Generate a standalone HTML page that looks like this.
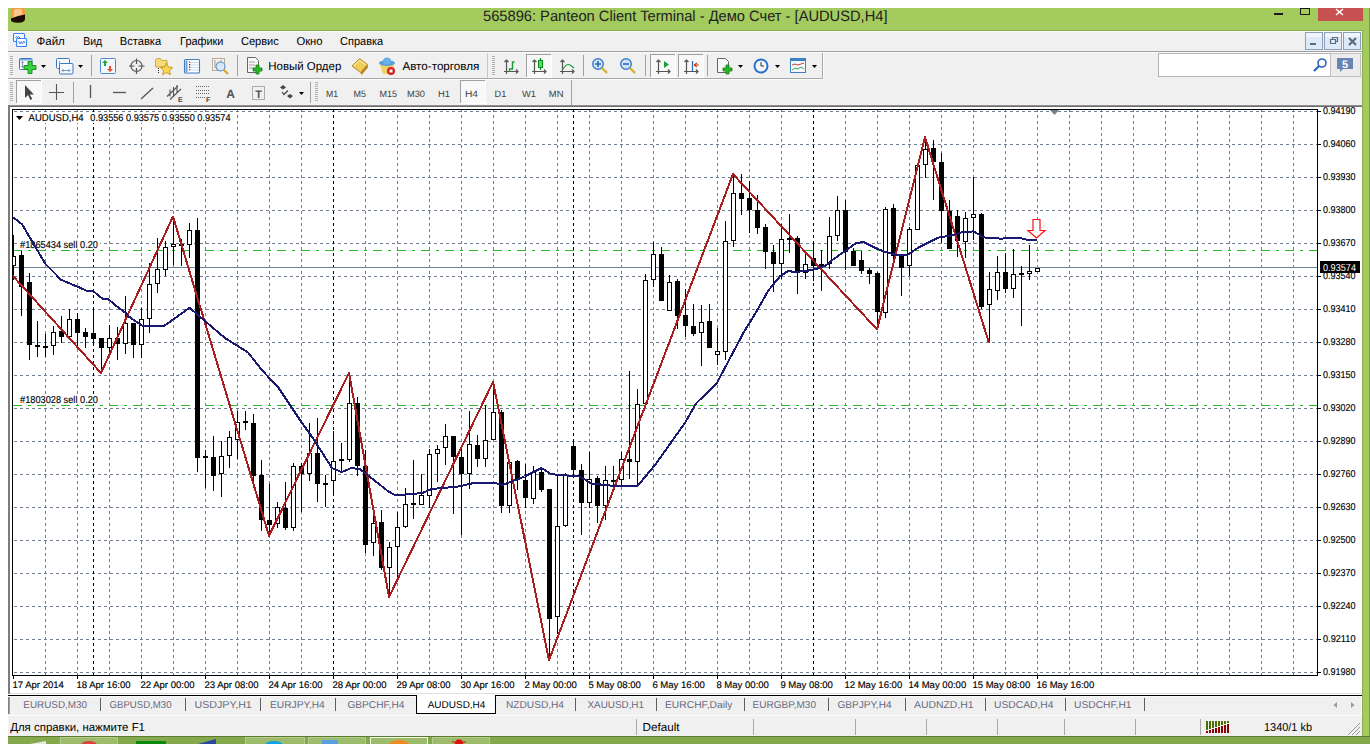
<!DOCTYPE html>
<html><head><meta charset="utf-8"><title>MT4</title>
<style>
html,body{margin:0;padding:0;width:1370px;height:744px;overflow:hidden;background:#fff;}
svg{position:absolute;left:0;top:0;display:block}
text{font-family:"Liberation Sans",sans-serif;}
.b{stroke:#000;stroke-width:0.15px;}
</style></head><body>
<svg width="1370" height="744" viewBox="0 0 1370 744" text-rendering="geometricPrecision">
<rect x="8" y="8" width="1362" height="23" fill="#a3cb5e" />
<rect x="8" y="30" width="1355" height="1" fill="#8aae4c" />
<rect x="1362" y="8" width="8" height="728" fill="#a3cb5e" />
<rect x="1362" y="30" width="1" height="706" fill="#8aae4c" />
<rect x="1369" y="8" width="1" height="728" fill="#7c9c44" />
<g transform="translate(11,8)"><rect x="0" y="0" width="14" height="12" rx="4" fill="#f79a38"/><path d="M3,1.5 Q7,0 11,1.5 L11.5,9 L2.5,10z" fill="#fdd0a0" opacity=".8"/><path d="M0,10.5 Q7,7.5 14,6.5 L14,11 Q14,14.7 7,14.7 Q0,14.7 0,12z" fill="#1e0c02"/></g>
<text x="483" y="20.8" font-size="15" fill="#222" font-weight="normal" text-anchor="start" font-family="Liberation Sans" textLength="404.5" lengthAdjust="spacingAndGlyphs" >565896: Panteon Client Terminal - Демо Счет - [AUDUSD,H4]</text>
<rect x="1274" y="13" width="9" height="2" fill="#1a1a1a" />
<rect x="1300.5" y="8.5" width="9" height="6" fill="none" stroke="#1a1a1a" stroke-width="1"/>
<rect x="1318" y="8" width="45" height="13" fill="#c75050" />
<path d="M1336,9 L1343,15 M1343,9 L1336,15" stroke="#fff" stroke-width="1.6"/>
<rect x="8" y="31" width="1354" height="1" fill="#fafafa" />
<rect x="8" y="32" width="1354" height="19" fill="#f0f0f0" />
<rect x="8" y="51" width="1354" height="1" fill="#a0a0a0" />
<rect x="8" y="52" width="1354" height="1" fill="#fafafa" />
<g><rect x="13.5" y="33.5" width="11" height="8" rx="1" fill="#fff" stroke="#3a80f0" stroke-width="1.1"/><path d="M15.5,38 l1,-1.5 1,1.5 1,-1.5 2,2" stroke="#3a80f0" fill="none"/><rect x="16.5" y="38.5" width="10" height="8" rx="1" fill="#fff" stroke="#3a80f0" stroke-width="1.1"/><path d="M18.5,41 l1.5,3 1.2,-2.5 1.2,2.5 1.5,-3 1,2" stroke="#3a80f0" fill="none" stroke-width="0.9"/></g>
<text x="36.5" y="45.2" font-size="11.5" fill="#000" font-weight="normal" text-anchor="start" font-family="Liberation Sans" textLength="28.3" lengthAdjust="spacingAndGlyphs" >Файл</text>
<text x="83.2" y="45.2" font-size="11.5" fill="#000" font-weight="normal" text-anchor="start" font-family="Liberation Sans" textLength="19.0" lengthAdjust="spacingAndGlyphs" >Вид</text>
<text x="119.7" y="45.2" font-size="11.5" fill="#000" font-weight="normal" text-anchor="start" font-family="Liberation Sans" textLength="41.5" lengthAdjust="spacingAndGlyphs" >Вставка</text>
<text x="180.1" y="45.2" font-size="11.5" fill="#000" font-weight="normal" text-anchor="start" font-family="Liberation Sans" textLength="43.3" lengthAdjust="spacingAndGlyphs" >Графики</text>
<text x="240.9" y="45.2" font-size="11.5" fill="#000" font-weight="normal" text-anchor="start" font-family="Liberation Sans" textLength="37.9" lengthAdjust="spacingAndGlyphs" >Сервис</text>
<text x="296.4" y="45.2" font-size="11.5" fill="#000" font-weight="normal" text-anchor="start" font-family="Liberation Sans" textLength="26.2" lengthAdjust="spacingAndGlyphs" >Окно</text>
<text x="340.1" y="45.2" font-size="11.5" fill="#000" font-weight="normal" text-anchor="start" font-family="Liberation Sans" textLength="43.0" lengthAdjust="spacingAndGlyphs" >Справка</text>
<rect x="1305.5" y="32.5" width="17" height="17" fill="#deeaf7" stroke="#8da0b8"/>
<rect x="1306" y="33" width="16" height="4" fill="#eef5fc" />
<rect x="1324.5" y="32.5" width="17" height="17" fill="#deeaf7" stroke="#8da0b8"/>
<rect x="1325" y="33" width="16" height="4" fill="#eef5fc" />
<rect x="1343.5" y="32.5" width="17" height="17" fill="#deeaf7" stroke="#8da0b8"/>
<rect x="1344" y="33" width="16" height="4" fill="#eef5fc" />
<rect x="1310" y="43" width="6" height="2" fill="#5c6b7e" />
<path d="M1330.5,39.5 h5 v4 h-5z M1332.5,39.5 v-2 h5 v4 h-2" fill="none" stroke="#5c6b7e" stroke-width="1.2"/>
<path d="M1349,38 L1356,45 M1356,38 L1349,45" stroke="#5c6b7e" stroke-width="2.2"/>
<rect x="8" y="53" width="1354" height="52" fill="#f0f0f0" />
<rect x="8" y="78" width="815" height="1" fill="#a8a8a8" />
<rect x="8" y="79" width="816" height="1" fill="#fcfcfc" />
<rect x="822" y="53" width="1" height="25" fill="#a8a8a8" />
<rect x="823" y="53" width="1" height="27" fill="#fcfcfc" />
<rect x="10" y="56" width="3" height="1" fill="#b0b0b0" />
<rect x="10" y="58" width="3" height="1" fill="#b0b0b0" />
<rect x="10" y="60" width="3" height="1" fill="#b0b0b0" />
<rect x="10" y="62" width="3" height="1" fill="#b0b0b0" />
<rect x="10" y="64" width="3" height="1" fill="#b0b0b0" />
<rect x="10" y="66" width="3" height="1" fill="#b0b0b0" />
<rect x="10" y="68" width="3" height="1" fill="#b0b0b0" />
<rect x="10" y="70" width="3" height="1" fill="#b0b0b0" />
<rect x="10" y="72" width="3" height="1" fill="#b0b0b0" />
<rect x="10" y="74" width="3" height="1" fill="#b0b0b0" />
<rect x="10" y="82" width="3" height="1" fill="#b0b0b0" />
<rect x="10" y="84" width="3" height="1" fill="#b0b0b0" />
<rect x="10" y="86" width="3" height="1" fill="#b0b0b0" />
<rect x="10" y="88" width="3" height="1" fill="#b0b0b0" />
<rect x="10" y="90" width="3" height="1" fill="#b0b0b0" />
<rect x="10" y="92" width="3" height="1" fill="#b0b0b0" />
<rect x="10" y="94" width="3" height="1" fill="#b0b0b0" />
<rect x="10" y="96" width="3" height="1" fill="#b0b0b0" />
<rect x="10" y="98" width="3" height="1" fill="#b0b0b0" />
<rect x="10" y="100" width="3" height="1" fill="#b0b0b0" />
<rect x="315" y="82" width="3" height="1" fill="#b0b0b0" />
<rect x="315" y="84" width="3" height="1" fill="#b0b0b0" />
<rect x="315" y="86" width="3" height="1" fill="#b0b0b0" />
<rect x="315" y="88" width="3" height="1" fill="#b0b0b0" />
<rect x="315" y="90" width="3" height="1" fill="#b0b0b0" />
<rect x="315" y="92" width="3" height="1" fill="#b0b0b0" />
<rect x="315" y="94" width="3" height="1" fill="#b0b0b0" />
<rect x="315" y="96" width="3" height="1" fill="#b0b0b0" />
<rect x="315" y="98" width="3" height="1" fill="#b0b0b0" />
<rect x="315" y="100" width="3" height="1" fill="#b0b0b0" />
<rect x="492" y="56" width="3" height="1" fill="#b0b0b0" />
<rect x="492" y="58" width="3" height="1" fill="#b0b0b0" />
<rect x="492" y="60" width="3" height="1" fill="#b0b0b0" />
<rect x="492" y="62" width="3" height="1" fill="#b0b0b0" />
<rect x="492" y="64" width="3" height="1" fill="#b0b0b0" />
<rect x="492" y="66" width="3" height="1" fill="#b0b0b0" />
<rect x="492" y="68" width="3" height="1" fill="#b0b0b0" />
<rect x="492" y="70" width="3" height="1" fill="#b0b0b0" />
<rect x="492" y="72" width="3" height="1" fill="#b0b0b0" />
<rect x="492" y="74" width="3" height="1" fill="#b0b0b0" />
<g transform="translate(19,58)"><rect x="0.5" y="0.5" width="12.5" height="11" rx="1" fill="#f6f9fd" stroke="#3a78c0"/><rect x="1" y="1" width="12" height="1.5" fill="#7aaae0"/><path d="M3.5,3.5 v6 M2.3,4.8 l1.2,-1.3 1.2,1.3 M2.3,8.2 l1.2,1.3 1.2,-1.3" stroke="#7090b0" stroke-width=".9" fill="none"/><path d="M9,3.5h4v4h4v4h-4v4h-4v-4h-4v-4h4z" fill="#3ad040" stroke="#108a10" stroke-width=".9"/></g>
<path d="M41,65 h5 l-2.5,3z" fill="#000"/>
<g transform="translate(56,58)"><rect x="0.5" y="0.5" width="13" height="10" rx="1" fill="#f6f9fd" stroke="#3a78c0"/><path d="M3.5,3 v5 M3.5,7.5h7 M9,6 l1.5,1.5 -1.5,1.5" stroke="#7090b0" stroke-width=".9" fill="none"/><rect x="3.5" y="5.5" width="13.5" height="10.5" rx="1" fill="#f6f9fd" stroke="#3a78c0"/><path d="M6,12.5h8 M7.5,11 l-1.5,1.5 1.5,1.5 M12.5,11 l1.5,1.5 -1.5,1.5" stroke="#7090b0" stroke-width=".9" fill="none"/></g>
<path d="M78,65 h5 l-2.5,3z" fill="#000"/>
<rect x="91" y="55" width="1" height="21" fill="#a0a0a0" />
<g transform="translate(100,58)"><rect x="0.5" y="0.5" width="15" height="15" rx="1" fill="#f4f8fc" stroke="#4a8ad0"/><path d="M5,2 l3,3h-2v3h-2v-3h-2z" fill="#1ea83a"/><path d="M10,14 l3,-3h-2v-3h-2v3h-2z" fill="#e8502a"/></g>
<g transform="translate(128.5,58.5)" stroke="#555" fill="none" stroke-width="1.2"><circle cx="8" cy="7.5" r="5.5"/><path d="M8,0v5.5 M8,9.5v6 M0.5,7.5h5.5 M10,7.5h6"/></g>
<g transform="translate(155,57)"><path d="M0.5,3.5 q0,-2 2,-2 h3 l1.5,2 h5 v6.5 h-11.5z" fill="#f6dc78" stroke="#c89a28" stroke-width=".8"/><path d="M3.5,11v6" stroke="#333" stroke-dasharray="1,1"/><path d="M11.5,6 l1.9,4 4.3,.5 -3.2,3 .9,4.3 -3.9,-2.2 -3.9,2.2 .9,-4.3 -3.2,-3 4.3,-.5z" fill="#f8d848" stroke="#b88a10" stroke-width=".8"/></g>
<g transform="translate(184,59)"><rect x="0.5" y="0.5" width="15" height="13.5" rx="1" fill="#fff" stroke="#3c7fc6" stroke-width="1.1"/><rect x="1.5" y="1.5" width="2" height="11.5" fill="#7a9ac0"/><path d="M5,3.5h10 M5,6h10 M5,8.5h10 M5,11h10" stroke="#b8d0f0" stroke-width=".8"/><rect x="5" y="2.5" width="1.2" height="1.2" fill="#e02020"/><rect x="5" y="5" width="1.2" height="1.2" fill="#222"/><rect x="5" y="7.5" width="1.2" height="1.2" fill="#222"/><rect x="5" y="10" width="1.2" height="1.2" fill="#e02020"/></g>
<g transform="translate(212,58)"><rect x="0.5" y="0.5" width="12" height="12" fill="#f6f2ea" stroke="#b8ae98"/><path d="M3,2v8 M9,2v6" stroke="#888" stroke-width=".8"/><circle cx="8.5" cy="8.5" r="4.5" fill="#d6e8f8" fill-opacity=".85" stroke="#5a90d0" stroke-width="1.1"/><path d="M11.5,11.5l4.5,4.5" stroke="#d8a828" stroke-width="2.2"/></g>
<rect x="237" y="55" width="1" height="21" fill="#a0a0a0" />
<g transform="translate(247,57)"><path d="M0.5,0.5h8l3,3v12h-11z" fill="#f8f8f8" stroke="#666"/><path d="M2,5h6 M2,8h6 M2,11h5" stroke="#888" stroke-width=".8"/><path d="M9,8h3v3h3v3h-3v3h-3v-3h-3v-3h3z" fill="#28b828" stroke="#187818" stroke-width=".8"/></g>
<text x="268.3" y="70.4" font-size="11.5" fill="#000" font-weight="normal" text-anchor="start" font-family="Liberation Sans" textLength="73" lengthAdjust="spacingAndGlyphs" >Новый Ордер</text>
<g><path d="M352,66 L359.5,58.5 L367.5,64.5 L360.5,72.5z" fill="#f0cc58" stroke="#a87818" stroke-width=".8"/><path d="M360.5,72.5 L367.5,64.5 L368,67.5 L361.5,75z" fill="#b8841c"/><path d="M354,66 L359.5,60.5 L365.5,65" stroke="#fff2b0" stroke-width="1" fill="none"/></g>
<g transform="translate(378,57)"><path d="M2,8h14l-3,9h-8z" fill="#f4d060"/><ellipse cx="9" cy="6" rx="8" ry="3" fill="#5aa0d8"/><ellipse cx="9" cy="4" rx="4" ry="3.5" fill="#6ab0e8"/><circle cx="13" cy="14" r="4" fill="#d82020"/><rect x="11.5" y="12.5" width="3" height="3" fill="#fff"/></g>
<text x="402.4" y="70.4" font-size="11.5" fill="#000" font-weight="normal" text-anchor="start" font-family="Liberation Sans" textLength="77" lengthAdjust="spacingAndGlyphs" >Авто-торговля</text>
<rect x="487" y="53" width="1" height="25" fill="#c8c8c8" />
<path d="M506.5,60 v14 M504,71.5 h14 M504.5,62 l2,-2 2,2 M516,69.5 l2,2 -2,2" stroke="#555" stroke-width="1.2" fill="none"/>
<path d="M509.5,72 v-3 h3 v-7 h2" stroke="#1a9a3a" stroke-width="1.4" fill="none"/>
<rect x="526" y="54" width="26" height="24" fill="#f8f8f8" />
<rect x="526" y="54" width="26" height="1" fill="#a0a0a0" />
<rect x="526" y="54" width="1" height="24" fill="#a0a0a0" />
<rect x="526" y="77" width="26" height="1" fill="#fff" />
<rect x="551" y="54" width="1" height="24" fill="#fff" />
<path d="M534.5,60 v14 M532,71.5 h14 M532.5,62 l2,-2 2,2 M544,69.5 l2,2 -2,2" stroke="#555" stroke-width="1.2" fill="none"/>
<path d="M540.5,58v12" stroke="#0a8a1a" stroke-width="1.2"/><rect x="538.5" y="60.5" width="4" height="7" fill="#50e060" stroke="#0a8a1a"/>
<path d="M562.5,60 v14 M560,71.5 h14 M560.5,62 l2,-2 2,2 M572,69.5 l2,2 -2,2" stroke="#555" stroke-width="1.2" fill="none"/>
<path d="M563,69 q4,-6 7,-4 t4,3" stroke="#1a9a3a" stroke-width="1.2" fill="none"/>
<rect x="583" y="55" width="1" height="21" fill="#a0a0a0" />
<g transform="translate(592,58)"><circle cx="6" cy="6" r="5.3" fill="#cfe4f8" stroke="#3a7cc8" stroke-width="1.4"/><path d="M3,6h6M6,3v6" stroke="#2a6ab8" stroke-width="1.6"/><path d="M10,10l5,5" stroke="#d8b030" stroke-width="2.4"/></g>
<g transform="translate(620,58)"><circle cx="6" cy="6" r="5.3" fill="#cfe4f8" stroke="#3a7cc8" stroke-width="1.4"/><path d="M3,6h6" stroke="#2a6ab8" stroke-width="1.6"/><path d="M10,10l5,5" stroke="#d8b030" stroke-width="2.4"/></g>
<rect x="645" y="55" width="1" height="21" fill="#a0a0a0" />
<rect x="650" y="54" width="26" height="24" fill="#f8f8f8" />
<rect x="650" y="54" width="26" height="1" fill="#a0a0a0" />
<rect x="650" y="54" width="1" height="24" fill="#a0a0a0" />
<rect x="650" y="77" width="26" height="1" fill="#fff" />
<rect x="675" y="54" width="1" height="24" fill="#fff" />
<path d="M658.5,60 v14 M656,71.5 h14 M656.5,62 l2,-2 2,2 M668,69.5 l2,2 -2,2" stroke="#555" stroke-width="1.2" fill="none"/>
<path d="M664,61 l5,3.5 -5,3.5z" fill="#1aa040"/>
<rect x="678" y="54" width="26" height="24" fill="#f8f8f8" />
<rect x="678" y="54" width="26" height="1" fill="#a0a0a0" />
<rect x="678" y="54" width="1" height="24" fill="#a0a0a0" />
<rect x="678" y="77" width="26" height="1" fill="#fff" />
<rect x="703" y="54" width="1" height="24" fill="#fff" />
<path d="M686.5,60 v14 M684,71.5 h14 M684.5,62 l2,-2 2,2 M696,69.5 l2,2 -2,2" stroke="#555" stroke-width="1.2" fill="none"/>
<path d="M692.5,61v10" stroke="#2a6ab8" stroke-width="1.2"/><path d="M694,65h5 M694,65l3,-2 M694,65l3,2" stroke="#d04010" stroke-width="1.1"/>
<rect x="707" y="55" width="1" height="21" fill="#a0a0a0" />
<g transform="translate(717,58)"><path d="M0.5,0.5h8l3,3v11h-11z" fill="#f8f8f8" stroke="#666"/><path d="M9,7h3v3h3v3h-3v3h-3v-3h-3v-3h3z" fill="#28b828" stroke="#187818" stroke-width=".8"/></g>
<path d="M738,65 h5 l-2.5,3z" fill="#000"/>
<g transform="translate(753,58)"><circle cx="8" cy="8" r="7.5" fill="#2a70c8"/><circle cx="8" cy="8" r="5.5" fill="#f4f8fc"/><path d="M8,4v4h3" stroke="#333" stroke-width="1" fill="none"/></g>
<path d="M775,65 h5 l-2.5,3z" fill="#000"/>
<g transform="translate(790,58)"><rect x="0.5" y="0.5" width="15" height="14" fill="#f4f8fc" stroke="#3c7fc6"/><rect x="1" y="1" width="14" height="2" fill="#3c7fc6"/><path d="M2,7 l3,-1 3,1 3,-1 3,-1" stroke="#c03020" fill="none" stroke-width=".9"/><path d="M2,12 l3,-2 3,1 3,-2 3,2" stroke="#20a040" fill="none" stroke-width=".9"/></g>
<path d="M812,65 h5 l-2.5,3z" fill="#000"/>
<rect x="1158.5" y="53.5" width="172" height="23" fill="#fff" stroke="#b4b4b4"/>
<g transform="translate(1313,58)"><circle cx="9" cy="5" r="4" fill="none" stroke="#2a62c0" stroke-width="1.6"/><path d="M6,8l-5,5" stroke="#2a62c0" stroke-width="2.2"/></g>
<rect x="1330.5" y="53.5" width="30" height="23" fill="#ececec" stroke="#c0c0c0"/>
<path d="M1337,58 h16 v11 h-10 l-3,3 v-3 h-3z" fill="#6a84b4"/>
<text x="1345" y="68" font-size="11" fill="#fff" font-weight="bold" text-anchor="middle" font-family="Liberation Sans" >5</text>
<rect x="16" y="80" width="26" height="24" fill="#f8f8f8" />
<rect x="16" y="80" width="26" height="1" fill="#a0a0a0" />
<rect x="16" y="80" width="1" height="24" fill="#a0a0a0" />
<rect x="16" y="103" width="26" height="1" fill="#fff" />
<rect x="41" y="80" width="1" height="24" fill="#fff" />
<path d="M25,85 l0,13 3,-3 2.5,5 1.8,-1 -2.5,-4.5 4,0z" fill="#444"/>
<path d="M56.5,84v16 M49,92.5h15" stroke="#555" stroke-width="1.1"/>
<rect x="73" y="82" width="1" height="21" fill="#a0a0a0" />
<path d="M90.5,85v13" stroke="#555" stroke-width="1.3"/>
<path d="M113,92.5h13" stroke="#555" stroke-width="1.3"/>
<path d="M141,99 l12,-11" stroke="#555" stroke-width="1.3"/>
<g stroke="#555" stroke-width="1.1" fill="none"><path d="M167,96.5 L178,86 M170,99.5 L181,89 M170,89.5 v7 M173.5,87 v9 M177,85 v8"/></g>
<text x="178" y="101.5" font-size="7" fill="#444" font-weight="bold" text-anchor="start" font-family="Liberation Sans" >E</text>
<g stroke="#666" stroke-width="1" stroke-dasharray="1,1"><path d="M196,86.5h13 M196,90.5h13 M196,93.5h13 M196,97.5h9"/></g>
<text x="206" y="101.5" font-size="7" fill="#444" font-weight="bold" text-anchor="start" font-family="Liberation Sans" >F</text>
<text x="230.5" y="98" font-size="12" fill="#555" font-weight="bold" text-anchor="middle" font-family="Liberation Sans" >A</text>
<rect x="252.5" y="86.5" width="12" height="13" fill="none" stroke="#666" stroke-dasharray="1,1"/>
<text x="258.5" y="97.5" font-size="11" fill="#555" font-weight="bold" text-anchor="middle" font-family="Liberation Sans" >T</text>
<path d="M280,87.5 l3,-2.5 3,2.5 -3,2z M287,96 l3,-2 3,2 -3,2.5z" fill="#444"/><path d="M282,92 l2,2.5 4,-4" stroke="#444" fill="none" stroke-width="1.2"/>
<path d="M299,92 h5 l-2.5,3z" fill="#000"/>
<rect x="310" y="82" width="1" height="21" fill="#a0a0a0" />
<text x="326" y="96.6" font-size="9.2" fill="#404040" font-weight="normal" text-anchor="start" font-family="Liberation Sans" textLength="12" lengthAdjust="spacingAndGlyphs" >M1</text>
<text x="353.5" y="96.6" font-size="9.2" fill="#404040" font-weight="normal" text-anchor="start" font-family="Liberation Sans" textLength="12.5" lengthAdjust="spacingAndGlyphs" >M5</text>
<text x="379.5" y="96.6" font-size="9.2" fill="#404040" font-weight="normal" text-anchor="start" font-family="Liberation Sans" textLength="17.5" lengthAdjust="spacingAndGlyphs" >M15</text>
<text x="407" y="96.6" font-size="9.2" fill="#404040" font-weight="normal" text-anchor="start" font-family="Liberation Sans" textLength="18" lengthAdjust="spacingAndGlyphs" >M30</text>
<text x="438" y="96.6" font-size="9.2" fill="#404040" font-weight="normal" text-anchor="start" font-family="Liberation Sans" textLength="12" lengthAdjust="spacingAndGlyphs" >H1</text>
<rect x="460" y="80" width="26" height="24" fill="#f8f8f8" />
<rect x="460" y="80" width="26" height="1" fill="#a0a0a0" />
<rect x="460" y="80" width="1" height="24" fill="#a0a0a0" />
<rect x="460" y="103" width="26" height="1" fill="#fff" />
<rect x="485" y="80" width="1" height="24" fill="#fff" />
<text x="465" y="96.6" font-size="9.2" fill="#404040" font-weight="normal" text-anchor="start" font-family="Liberation Sans" textLength="13" lengthAdjust="spacingAndGlyphs" >H4</text>
<text x="494.6" y="96.6" font-size="9.2" fill="#404040" font-weight="normal" text-anchor="start" font-family="Liberation Sans" textLength="11.8" lengthAdjust="spacingAndGlyphs" >D1</text>
<text x="522" y="96.6" font-size="9.2" fill="#404040" font-weight="normal" text-anchor="start" font-family="Liberation Sans" textLength="14" lengthAdjust="spacingAndGlyphs" >W1</text>
<text x="548.8" y="96.6" font-size="9.2" fill="#404040" font-weight="normal" text-anchor="start" font-family="Liberation Sans" textLength="14.7" lengthAdjust="spacingAndGlyphs" >MN</text>
<rect x="571" y="80" width="1" height="25" fill="#a0a0a0" />
<rect x="8" y="105" width="1354" height="1" fill="#909090" />
<rect x="8" y="106" width="1354" height="1" fill="#6c6c6c" />
<rect x="8" y="105" width="2" height="589" fill="#7c7c7c" />
<rect x="10" y="107" width="1352" height="588" fill="#ffffff" />
<clipPath id="cc"><rect x="13" y="110" width="1304" height="565"/></clipPath>
<line x1="13" y1="111.5" x2="1317" y2="111.5" stroke="#708090" stroke-dasharray="3,3" stroke-dashoffset="-1" shape-rendering="crispEdges"/>
<line x1="13" y1="144.5" x2="1317" y2="144.5" stroke="#708090" stroke-dasharray="3,3" stroke-dashoffset="-1" shape-rendering="crispEdges"/>
<line x1="13" y1="177.5" x2="1317" y2="177.5" stroke="#708090" stroke-dasharray="3,3" stroke-dashoffset="-1" shape-rendering="crispEdges"/>
<line x1="13" y1="210.5" x2="1317" y2="210.5" stroke="#708090" stroke-dasharray="3,3" stroke-dashoffset="-1" shape-rendering="crispEdges"/>
<line x1="13" y1="243.5" x2="1317" y2="243.5" stroke="#708090" stroke-dasharray="3,3" stroke-dashoffset="-1" shape-rendering="crispEdges"/>
<line x1="13" y1="276.5" x2="1317" y2="276.5" stroke="#708090" stroke-dasharray="3,3" stroke-dashoffset="-1" shape-rendering="crispEdges"/>
<line x1="13" y1="309.5" x2="1317" y2="309.5" stroke="#708090" stroke-dasharray="3,3" stroke-dashoffset="-1" shape-rendering="crispEdges"/>
<line x1="13" y1="342.5" x2="1317" y2="342.5" stroke="#708090" stroke-dasharray="3,3" stroke-dashoffset="-1" shape-rendering="crispEdges"/>
<line x1="13" y1="375.5" x2="1317" y2="375.5" stroke="#708090" stroke-dasharray="3,3" stroke-dashoffset="-1" shape-rendering="crispEdges"/>
<line x1="13" y1="408.5" x2="1317" y2="408.5" stroke="#708090" stroke-dasharray="3,3" stroke-dashoffset="-1" shape-rendering="crispEdges"/>
<line x1="13" y1="441.5" x2="1317" y2="441.5" stroke="#708090" stroke-dasharray="3,3" stroke-dashoffset="-1" shape-rendering="crispEdges"/>
<line x1="13" y1="474.5" x2="1317" y2="474.5" stroke="#708090" stroke-dasharray="3,3" stroke-dashoffset="-1" shape-rendering="crispEdges"/>
<line x1="13" y1="507.5" x2="1317" y2="507.5" stroke="#708090" stroke-dasharray="3,3" stroke-dashoffset="-1" shape-rendering="crispEdges"/>
<line x1="13" y1="540.5" x2="1317" y2="540.5" stroke="#708090" stroke-dasharray="3,3" stroke-dashoffset="-1" shape-rendering="crispEdges"/>
<line x1="13" y1="573.5" x2="1317" y2="573.5" stroke="#708090" stroke-dasharray="3,3" stroke-dashoffset="-1" shape-rendering="crispEdges"/>
<line x1="13" y1="606.5" x2="1317" y2="606.5" stroke="#708090" stroke-dasharray="3,3" stroke-dashoffset="-1" shape-rendering="crispEdges"/>
<line x1="13" y1="639.5" x2="1317" y2="639.5" stroke="#708090" stroke-dasharray="3,3" stroke-dashoffset="-1" shape-rendering="crispEdges"/>
<line x1="13" y1="672.5" x2="1317" y2="672.5" stroke="#708090" stroke-dasharray="3,3" stroke-dashoffset="-1" shape-rendering="crispEdges"/>
<line x1="45.5" y1="110" x2="45.5" y2="675" stroke="#708090" stroke-dasharray="3,3" stroke-dashoffset="1" shape-rendering="crispEdges"/>
<line x1="77.5" y1="110" x2="77.5" y2="675" stroke="#708090" stroke-dasharray="3,3" stroke-dashoffset="1" shape-rendering="crispEdges"/>
<line x1="109.5" y1="110" x2="109.5" y2="675" stroke="#708090" stroke-dasharray="3,3" stroke-dashoffset="1" shape-rendering="crispEdges"/>
<line x1="141.5" y1="110" x2="141.5" y2="675" stroke="#708090" stroke-dasharray="3,3" stroke-dashoffset="1" shape-rendering="crispEdges"/>
<line x1="173.5" y1="110" x2="173.5" y2="675" stroke="#708090" stroke-dasharray="3,3" stroke-dashoffset="1" shape-rendering="crispEdges"/>
<line x1="205.5" y1="110" x2="205.5" y2="675" stroke="#708090" stroke-dasharray="3,3" stroke-dashoffset="1" shape-rendering="crispEdges"/>
<line x1="237.5" y1="110" x2="237.5" y2="675" stroke="#708090" stroke-dasharray="3,3" stroke-dashoffset="1" shape-rendering="crispEdges"/>
<line x1="269.5" y1="110" x2="269.5" y2="675" stroke="#708090" stroke-dasharray="3,3" stroke-dashoffset="1" shape-rendering="crispEdges"/>
<line x1="301.5" y1="110" x2="301.5" y2="675" stroke="#708090" stroke-dasharray="3,3" stroke-dashoffset="1" shape-rendering="crispEdges"/>
<line x1="333.5" y1="110" x2="333.5" y2="675" stroke="#708090" stroke-dasharray="3,3" stroke-dashoffset="1" shape-rendering="crispEdges"/>
<line x1="365.5" y1="110" x2="365.5" y2="675" stroke="#708090" stroke-dasharray="3,3" stroke-dashoffset="1" shape-rendering="crispEdges"/>
<line x1="397.5" y1="110" x2="397.5" y2="675" stroke="#708090" stroke-dasharray="3,3" stroke-dashoffset="1" shape-rendering="crispEdges"/>
<line x1="429.5" y1="110" x2="429.5" y2="675" stroke="#708090" stroke-dasharray="3,3" stroke-dashoffset="1" shape-rendering="crispEdges"/>
<line x1="461.5" y1="110" x2="461.5" y2="675" stroke="#708090" stroke-dasharray="3,3" stroke-dashoffset="1" shape-rendering="crispEdges"/>
<line x1="493.5" y1="110" x2="493.5" y2="675" stroke="#708090" stroke-dasharray="3,3" stroke-dashoffset="1" shape-rendering="crispEdges"/>
<line x1="525.5" y1="110" x2="525.5" y2="675" stroke="#708090" stroke-dasharray="3,3" stroke-dashoffset="1" shape-rendering="crispEdges"/>
<line x1="557.5" y1="110" x2="557.5" y2="675" stroke="#708090" stroke-dasharray="3,3" stroke-dashoffset="1" shape-rendering="crispEdges"/>
<line x1="589.5" y1="110" x2="589.5" y2="675" stroke="#708090" stroke-dasharray="3,3" stroke-dashoffset="1" shape-rendering="crispEdges"/>
<line x1="621.5" y1="110" x2="621.5" y2="675" stroke="#708090" stroke-dasharray="3,3" stroke-dashoffset="1" shape-rendering="crispEdges"/>
<line x1="653.5" y1="110" x2="653.5" y2="675" stroke="#708090" stroke-dasharray="3,3" stroke-dashoffset="1" shape-rendering="crispEdges"/>
<line x1="685.5" y1="110" x2="685.5" y2="675" stroke="#708090" stroke-dasharray="3,3" stroke-dashoffset="1" shape-rendering="crispEdges"/>
<line x1="717.5" y1="110" x2="717.5" y2="675" stroke="#708090" stroke-dasharray="3,3" stroke-dashoffset="1" shape-rendering="crispEdges"/>
<line x1="749.5" y1="110" x2="749.5" y2="675" stroke="#708090" stroke-dasharray="3,3" stroke-dashoffset="1" shape-rendering="crispEdges"/>
<line x1="781.5" y1="110" x2="781.5" y2="675" stroke="#708090" stroke-dasharray="3,3" stroke-dashoffset="1" shape-rendering="crispEdges"/>
<line x1="813.5" y1="110" x2="813.5" y2="675" stroke="#708090" stroke-dasharray="3,3" stroke-dashoffset="1" shape-rendering="crispEdges"/>
<line x1="845.5" y1="110" x2="845.5" y2="675" stroke="#708090" stroke-dasharray="3,3" stroke-dashoffset="1" shape-rendering="crispEdges"/>
<line x1="877.5" y1="110" x2="877.5" y2="675" stroke="#708090" stroke-dasharray="3,3" stroke-dashoffset="1" shape-rendering="crispEdges"/>
<line x1="909.5" y1="110" x2="909.5" y2="675" stroke="#708090" stroke-dasharray="3,3" stroke-dashoffset="1" shape-rendering="crispEdges"/>
<line x1="941.5" y1="110" x2="941.5" y2="675" stroke="#708090" stroke-dasharray="3,3" stroke-dashoffset="1" shape-rendering="crispEdges"/>
<line x1="973.5" y1="110" x2="973.5" y2="675" stroke="#708090" stroke-dasharray="3,3" stroke-dashoffset="1" shape-rendering="crispEdges"/>
<line x1="1005.5" y1="110" x2="1005.5" y2="675" stroke="#708090" stroke-dasharray="3,3" stroke-dashoffset="1" shape-rendering="crispEdges"/>
<line x1="1037.5" y1="110" x2="1037.5" y2="675" stroke="#708090" stroke-dasharray="3,3" stroke-dashoffset="1" shape-rendering="crispEdges"/>
<line x1="1069.5" y1="110" x2="1069.5" y2="675" stroke="#708090" stroke-dasharray="3,3" stroke-dashoffset="1" shape-rendering="crispEdges"/>
<line x1="1101.5" y1="110" x2="1101.5" y2="675" stroke="#708090" stroke-dasharray="3,3" stroke-dashoffset="1" shape-rendering="crispEdges"/>
<line x1="1133.5" y1="110" x2="1133.5" y2="675" stroke="#708090" stroke-dasharray="3,3" stroke-dashoffset="1" shape-rendering="crispEdges"/>
<line x1="1165.5" y1="110" x2="1165.5" y2="675" stroke="#708090" stroke-dasharray="3,3" stroke-dashoffset="1" shape-rendering="crispEdges"/>
<line x1="1197.5" y1="110" x2="1197.5" y2="675" stroke="#708090" stroke-dasharray="3,3" stroke-dashoffset="1" shape-rendering="crispEdges"/>
<line x1="1229.5" y1="110" x2="1229.5" y2="675" stroke="#708090" stroke-dasharray="3,3" stroke-dashoffset="1" shape-rendering="crispEdges"/>
<line x1="1261.5" y1="110" x2="1261.5" y2="675" stroke="#708090" stroke-dasharray="3,3" stroke-dashoffset="1" shape-rendering="crispEdges"/>
<line x1="1293.5" y1="110" x2="1293.5" y2="675" stroke="#708090" stroke-dasharray="3,3" stroke-dashoffset="1" shape-rendering="crispEdges"/>
<line x1="93.5" y1="110" x2="93.5" y2="675" stroke="#000" stroke-dasharray="3,3" stroke-dashoffset="1" shape-rendering="crispEdges"/>
<line x1="333.5" y1="110" x2="333.5" y2="675" stroke="#000" stroke-dasharray="3,3" stroke-dashoffset="1" shape-rendering="crispEdges"/>
<line x1="573.5" y1="110" x2="573.5" y2="675" stroke="#000" stroke-dasharray="3,3" stroke-dashoffset="1" shape-rendering="crispEdges"/>
<line x1="813.5" y1="110" x2="813.5" y2="675" stroke="#000" stroke-dasharray="3,3" stroke-dashoffset="1" shape-rendering="crispEdges"/>
<line x1="13" y1="250.5" x2="1317" y2="250.5" stroke="#22bb22" stroke-dasharray="9,6,3,6" stroke-dashoffset="0" shape-rendering="crispEdges"/>
<line x1="13" y1="405.5" x2="1317" y2="405.5" stroke="#22bb22" stroke-dasharray="9,6,3,6" stroke-dashoffset="0" shape-rendering="crispEdges"/>
<rect x="18" y="239" width="82" height="10" fill="#fff" />
<rect x="18" y="394" width="82" height="10" fill="#fff" />
<text x="20" y="247.7" font-size="10" fill="#000" font-weight="normal" text-anchor="start" font-family="Liberation Sans" textLength="78" lengthAdjust="spacingAndGlyphs" class="b">#1865434 sell 0.20</text>
<text x="20" y="402.7" font-size="10" fill="#000" font-weight="normal" text-anchor="start" font-family="Liberation Sans" textLength="78" lengthAdjust="spacingAndGlyphs" class="b">#1803028 sell 0.20</text>
<rect x="13" y="267" width="1304" height="1" fill="#708090" />
<g clip-path="url(#cc)" shape-rendering="crispEdges"><rect x="13" y="235" width="1" height="45" fill="#000"/><rect x="11.5" y="256.5" width="4" height="9" fill="#fff" stroke="#000"/><rect x="21" y="251" width="1" height="65" fill="#000"/><rect x="19" y="255" width="5" height="32" fill="#000"/><rect x="29" y="273" width="1" height="87" fill="#000"/><rect x="27" y="282" width="5" height="63" fill="#000"/><rect x="37" y="321" width="1" height="36" fill="#000"/><rect x="35" y="345" width="5" height="2" fill="#000"/><rect x="45" y="334" width="1" height="23" fill="#000"/><rect x="43" y="346" width="5" height="2" fill="#000"/><rect x="53" y="326" width="1" height="29" fill="#000"/><rect x="51.5" y="332.5" width="4" height="13" fill="#fff" stroke="#000"/><rect x="61" y="316" width="1" height="27" fill="#000"/><rect x="59" y="331" width="5" height="6" fill="#000"/><rect x="69" y="309" width="1" height="31" fill="#000"/><rect x="67.5" y="319.5" width="4" height="17" fill="#fff" stroke="#000"/><rect x="77" y="313" width="1" height="33" fill="#000"/><rect x="75" y="319" width="5" height="14" fill="#000"/><rect x="85" y="328" width="1" height="20" fill="#000"/><rect x="83" y="332" width="5" height="5" fill="#000"/><rect x="93" y="310" width="1" height="35" fill="#000"/><rect x="91" y="333" width="5" height="6" fill="#000"/><rect x="101" y="338" width="1" height="35" fill="#000"/><rect x="99" y="338" width="5" height="10" fill="#000"/><rect x="109" y="325" width="1" height="30" fill="#000"/><rect x="107.5" y="338.5" width="4" height="9" fill="#fff" stroke="#000"/><rect x="117" y="327" width="1" height="33" fill="#000"/><rect x="115" y="338" width="5" height="6" fill="#000"/><rect x="125" y="296" width="1" height="58" fill="#000"/><rect x="123.5" y="323.5" width="4" height="20" fill="#fff" stroke="#000"/><rect x="133" y="323" width="1" height="35" fill="#000"/><rect x="131" y="323" width="5" height="22" fill="#000"/><rect x="141" y="308" width="1" height="50" fill="#000"/><rect x="139.5" y="319.5" width="4" height="25" fill="#fff" stroke="#000"/><rect x="149" y="263" width="1" height="70" fill="#000"/><rect x="147.5" y="284.5" width="4" height="34" fill="#fff" stroke="#000"/><rect x="157" y="238" width="1" height="55" fill="#000"/><rect x="155.5" y="269.5" width="4" height="14" fill="#fff" stroke="#000"/><rect x="165" y="241" width="1" height="35" fill="#000"/><rect x="163.5" y="247.5" width="4" height="22" fill="#fff" stroke="#000"/><rect x="173" y="216" width="1" height="49" fill="#000"/><rect x="171.5" y="244.5" width="4" height="2" fill="#fff" stroke="#000"/><rect x="181" y="239" width="1" height="27" fill="#000"/><rect x="179" y="244" width="5" height="2" fill="#000"/><rect x="189" y="223" width="1" height="35" fill="#000"/><rect x="187.5" y="230.5" width="4" height="14" fill="#fff" stroke="#000"/><rect x="197" y="218" width="1" height="254" fill="#000"/><rect x="195" y="230" width="5" height="228" fill="#000"/><rect x="205" y="450" width="1" height="38" fill="#000"/><rect x="203" y="456" width="5" height="2" fill="#000"/><rect x="213" y="436" width="1" height="55" fill="#000"/><rect x="211" y="457" width="5" height="19" fill="#000"/><rect x="221" y="441" width="1" height="56" fill="#000"/><rect x="219.5" y="456.5" width="4" height="17" fill="#fff" stroke="#000"/><rect x="229" y="431" width="1" height="37" fill="#000"/><rect x="227.5" y="437.5" width="4" height="18" fill="#fff" stroke="#000"/><rect x="237" y="411" width="1" height="48" fill="#000"/><rect x="235.5" y="422.5" width="4" height="17" fill="#fff" stroke="#000"/><rect x="245" y="411" width="1" height="19" fill="#000"/><rect x="243" y="421" width="5" height="2" fill="#000"/><rect x="253" y="414" width="1" height="70" fill="#000"/><rect x="251" y="423" width="5" height="53" fill="#000"/><rect x="261" y="460" width="1" height="71" fill="#000"/><rect x="259" y="475" width="5" height="45" fill="#000"/><rect x="269" y="484" width="1" height="52" fill="#000"/><rect x="267" y="520" width="5" height="5" fill="#000"/><rect x="277" y="502" width="1" height="26" fill="#000"/><rect x="275.5" y="507.5" width="4" height="16" fill="#fff" stroke="#000"/><rect x="285" y="482" width="1" height="48" fill="#000"/><rect x="283" y="508" width="5" height="20" fill="#000"/><rect x="293" y="463" width="1" height="68" fill="#000"/><rect x="291.5" y="466.5" width="4" height="61" fill="#fff" stroke="#000"/><rect x="301" y="463" width="1" height="49" fill="#000"/><rect x="299" y="466" width="5" height="8" fill="#000"/><rect x="309" y="423" width="1" height="58" fill="#000"/><rect x="307.5" y="453.5" width="4" height="20" fill="#fff" stroke="#000"/><rect x="317" y="418" width="1" height="84" fill="#000"/><rect x="315" y="453" width="5" height="31" fill="#000"/><rect x="325" y="475" width="1" height="32" fill="#000"/><rect x="323" y="483" width="5" height="2" fill="#000"/><rect x="333" y="431" width="1" height="65" fill="#000"/><rect x="331.5" y="461.5" width="4" height="19" fill="#fff" stroke="#000"/><rect x="341" y="443" width="1" height="30" fill="#000"/><rect x="339.5" y="459.5" width="4" height="1" fill="#fff" stroke="#000"/><rect x="349" y="373" width="1" height="89" fill="#000"/><rect x="347.5" y="403.5" width="4" height="56" fill="#fff" stroke="#000"/><rect x="357" y="397" width="1" height="79" fill="#000"/><rect x="355" y="403" width="5" height="63" fill="#000"/><rect x="365" y="450" width="1" height="103" fill="#000"/><rect x="363" y="466" width="5" height="79" fill="#000"/><rect x="373" y="514" width="1" height="42" fill="#000"/><rect x="371.5" y="523.5" width="4" height="19" fill="#fff" stroke="#000"/><rect x="381" y="510" width="1" height="60" fill="#000"/><rect x="379" y="522" width="5" height="46" fill="#000"/><rect x="389" y="542" width="1" height="55" fill="#000"/><rect x="387.5" y="547.5" width="4" height="20" fill="#fff" stroke="#000"/><rect x="397" y="512" width="1" height="70" fill="#000"/><rect x="395.5" y="527.5" width="4" height="19" fill="#fff" stroke="#000"/><rect x="405" y="488" width="1" height="40" fill="#000"/><rect x="403.5" y="504.5" width="4" height="22" fill="#fff" stroke="#000"/><rect x="413" y="460" width="1" height="59" fill="#000"/><rect x="411" y="503" width="5" height="2" fill="#000"/><rect x="421" y="474" width="1" height="31" fill="#000"/><rect x="419.5" y="495.5" width="4" height="9" fill="#fff" stroke="#000"/><rect x="429" y="449" width="1" height="59" fill="#000"/><rect x="427.5" y="454.5" width="4" height="41" fill="#fff" stroke="#000"/><rect x="437" y="445" width="1" height="37" fill="#000"/><rect x="435.5" y="449.5" width="4" height="4" fill="#fff" stroke="#000"/><rect x="445" y="424" width="1" height="41" fill="#000"/><rect x="443.5" y="436.5" width="4" height="11" fill="#fff" stroke="#000"/><rect x="453" y="436" width="1" height="78" fill="#000"/><rect x="451" y="436" width="5" height="21" fill="#000"/><rect x="461" y="449" width="1" height="86" fill="#000"/><rect x="459" y="457" width="5" height="17" fill="#000"/><rect x="469" y="411" width="1" height="78" fill="#000"/><rect x="467.5" y="444.5" width="4" height="29" fill="#fff" stroke="#000"/><rect x="477" y="435" width="1" height="32" fill="#000"/><rect x="475" y="445" width="5" height="14" fill="#000"/><rect x="485" y="405" width="1" height="62" fill="#000"/><rect x="483.5" y="440.5" width="4" height="18" fill="#fff" stroke="#000"/><rect x="493" y="382" width="1" height="58" fill="#000"/><rect x="491.5" y="412.5" width="4" height="27" fill="#fff" stroke="#000"/><rect x="501" y="410" width="1" height="103" fill="#000"/><rect x="499" y="412" width="5" height="94" fill="#000"/><rect x="509" y="461" width="1" height="52" fill="#000"/><rect x="507.5" y="462.5" width="4" height="43" fill="#fff" stroke="#000"/><rect x="517" y="460" width="1" height="30" fill="#000"/><rect x="515" y="461" width="5" height="18" fill="#000"/><rect x="525" y="464" width="1" height="44" fill="#000"/><rect x="523" y="480" width="5" height="18" fill="#000"/><rect x="533" y="466" width="1" height="38" fill="#000"/><rect x="531.5" y="472.5" width="4" height="26" fill="#fff" stroke="#000"/><rect x="541" y="467" width="1" height="25" fill="#000"/><rect x="539" y="472" width="5" height="18" fill="#000"/><rect x="549" y="489" width="1" height="171" fill="#000"/><rect x="547" y="489" width="5" height="130" fill="#000"/><rect x="557" y="476" width="1" height="158" fill="#000"/><rect x="555.5" y="526.5" width="4" height="90" fill="#fff" stroke="#000"/><rect x="565" y="473" width="1" height="54" fill="#000"/><rect x="563.5" y="475.5" width="4" height="50" fill="#fff" stroke="#000"/><rect x="573" y="440" width="1" height="35" fill="#000"/><rect x="571" y="446" width="5" height="24" fill="#000"/><rect x="581" y="464" width="1" height="71" fill="#000"/><rect x="579" y="470" width="5" height="33" fill="#000"/><rect x="589" y="452" width="1" height="56" fill="#000"/><rect x="587.5" y="479.5" width="4" height="23" fill="#fff" stroke="#000"/><rect x="597" y="476" width="1" height="47" fill="#000"/><rect x="595" y="478" width="5" height="28" fill="#000"/><rect x="605" y="466" width="1" height="54" fill="#000"/><rect x="603.5" y="480.5" width="4" height="25" fill="#fff" stroke="#000"/><rect x="613" y="466" width="1" height="25" fill="#000"/><rect x="611" y="480" width="5" height="2" fill="#000"/><rect x="621" y="452" width="1" height="34" fill="#000"/><rect x="619.5" y="459.5" width="4" height="20" fill="#fff" stroke="#000"/><rect x="629" y="371" width="1" height="108" fill="#000"/><rect x="627" y="459" width="5" height="3" fill="#000"/><rect x="637" y="389" width="1" height="97" fill="#000"/><rect x="635.5" y="404.5" width="4" height="57" fill="#fff" stroke="#000"/><rect x="645" y="274" width="1" height="130" fill="#000"/><rect x="643.5" y="280.5" width="4" height="123" fill="#fff" stroke="#000"/><rect x="653" y="242" width="1" height="45" fill="#000"/><rect x="651.5" y="254.5" width="4" height="25" fill="#fff" stroke="#000"/><rect x="661" y="247" width="1" height="54" fill="#000"/><rect x="659" y="254" width="5" height="47" fill="#000"/><rect x="669" y="275" width="1" height="36" fill="#000"/><rect x="667.5" y="282.5" width="4" height="28" fill="#fff" stroke="#000"/><rect x="677" y="279" width="1" height="50" fill="#000"/><rect x="675" y="281" width="5" height="35" fill="#000"/><rect x="685" y="289" width="1" height="48" fill="#000"/><rect x="683" y="315" width="5" height="11" fill="#000"/><rect x="693" y="304" width="1" height="32" fill="#000"/><rect x="691" y="326" width="5" height="8" fill="#000"/><rect x="701" y="305" width="1" height="61" fill="#000"/><rect x="699.5" y="322.5" width="4" height="10" fill="#fff" stroke="#000"/><rect x="709" y="304" width="1" height="44" fill="#000"/><rect x="707" y="321" width="5" height="27" fill="#000"/><rect x="717" y="328" width="1" height="37" fill="#000"/><rect x="715.5" y="351.5" width="4" height="3" fill="#fff" stroke="#000"/><rect x="725" y="221" width="1" height="139" fill="#000"/><rect x="723.5" y="241.5" width="4" height="110" fill="#fff" stroke="#000"/><rect x="733" y="174" width="1" height="73" fill="#000"/><rect x="731.5" y="193.5" width="4" height="47" fill="#fff" stroke="#000"/><rect x="741" y="174" width="1" height="41" fill="#000"/><rect x="739" y="193" width="5" height="6" fill="#000"/><rect x="749" y="181" width="1" height="52" fill="#000"/><rect x="747" y="198" width="5" height="12" fill="#000"/><rect x="757" y="195" width="1" height="39" fill="#000"/><rect x="755" y="210" width="5" height="18" fill="#000"/><rect x="765" y="224" width="1" height="45" fill="#000"/><rect x="763" y="227" width="5" height="25" fill="#000"/><rect x="773" y="245" width="1" height="47" fill="#000"/><rect x="771" y="252" width="5" height="12" fill="#000"/><rect x="781" y="224" width="1" height="55" fill="#000"/><rect x="779.5" y="239.5" width="4" height="24" fill="#fff" stroke="#000"/><rect x="789" y="214" width="1" height="39" fill="#000"/><rect x="787" y="238" width="5" height="2" fill="#000"/><rect x="797" y="236" width="1" height="58" fill="#000"/><rect x="795" y="238" width="5" height="35" fill="#000"/><rect x="805" y="252" width="1" height="27" fill="#000"/><rect x="803.5" y="264.5" width="4" height="8" fill="#fff" stroke="#000"/><rect x="813" y="242" width="1" height="39" fill="#000"/><rect x="811" y="258" width="5" height="8" fill="#000"/><rect x="821" y="250" width="1" height="41" fill="#000"/><rect x="819.5" y="264.5" width="4" height="1" fill="#fff" stroke="#000"/><rect x="829" y="217" width="1" height="52" fill="#000"/><rect x="827.5" y="236.5" width="4" height="27" fill="#fff" stroke="#000"/><rect x="837" y="196" width="1" height="45" fill="#000"/><rect x="835.5" y="210.5" width="4" height="25" fill="#fff" stroke="#000"/><rect x="845" y="200" width="1" height="70" fill="#000"/><rect x="843" y="210" width="5" height="42" fill="#000"/><rect x="853" y="248" width="1" height="18" fill="#000"/><rect x="851" y="251" width="5" height="15" fill="#000"/><rect x="861" y="251" width="1" height="23" fill="#000"/><rect x="859" y="260" width="5" height="11" fill="#000"/><rect x="869" y="268" width="1" height="16" fill="#000"/><rect x="867" y="270" width="5" height="4" fill="#000"/><rect x="877" y="272" width="1" height="57" fill="#000"/><rect x="875" y="273" width="5" height="39" fill="#000"/><rect x="885" y="207" width="1" height="111" fill="#000"/><rect x="883.5" y="209.5" width="4" height="103" fill="#fff" stroke="#000"/><rect x="893" y="204" width="1" height="62" fill="#000"/><rect x="891" y="208" width="5" height="48" fill="#000"/><rect x="901" y="256" width="1" height="40" fill="#000"/><rect x="899" y="256" width="5" height="12" fill="#000"/><rect x="909" y="227" width="1" height="49" fill="#000"/><rect x="907.5" y="229.5" width="4" height="36" fill="#fff" stroke="#000"/><rect x="917" y="165" width="1" height="65" fill="#000"/><rect x="915.5" y="165.5" width="4" height="64" fill="#fff" stroke="#000"/><rect x="925" y="137" width="1" height="41" fill="#000"/><rect x="923.5" y="149.5" width="4" height="15" fill="#fff" stroke="#000"/><rect x="933" y="140" width="1" height="60" fill="#000"/><rect x="931" y="148" width="5" height="14" fill="#000"/><rect x="941" y="153" width="1" height="90" fill="#000"/><rect x="939" y="162" width="5" height="49" fill="#000"/><rect x="949" y="200" width="1" height="49" fill="#000"/><rect x="947" y="211" width="5" height="38" fill="#000"/><rect x="957" y="210" width="1" height="47" fill="#000"/><rect x="955" y="216" width="5" height="25" fill="#000"/><rect x="965" y="212" width="1" height="46" fill="#000"/><rect x="963.5" y="218.5" width="4" height="23" fill="#fff" stroke="#000"/><rect x="973" y="177" width="1" height="63" fill="#000"/><rect x="971.5" y="214.5" width="4" height="3" fill="#fff" stroke="#000"/><rect x="981" y="213" width="1" height="96" fill="#000"/><rect x="979" y="214" width="5" height="93" fill="#000"/><rect x="989" y="272" width="1" height="71" fill="#000"/><rect x="987.5" y="289.5" width="4" height="15" fill="#fff" stroke="#000"/><rect x="997" y="256" width="1" height="44" fill="#000"/><rect x="995.5" y="272.5" width="4" height="18" fill="#fff" stroke="#000"/><rect x="1005" y="253" width="1" height="40" fill="#000"/><rect x="1003" y="272" width="5" height="17" fill="#000"/><rect x="1013" y="249" width="1" height="49" fill="#000"/><rect x="1011.5" y="274.5" width="4" height="14" fill="#fff" stroke="#000"/><rect x="1021" y="266" width="1" height="60" fill="#000"/><rect x="1019" y="273" width="5" height="2" fill="#000"/><rect x="1029" y="245" width="1" height="35" fill="#000"/><rect x="1027.5" y="271.5" width="4" height="2" fill="#fff" stroke="#000"/><rect x="1037" y="268" width="1" height="4" fill="#000"/><rect x="1035.5" y="268.5" width="4" height="3" fill="#fff" stroke="#000"/></g>
<polyline clip-path="url(#cc)" points="12,275 101,373 173,216.5 269,535.7 349,373 389,597 493,382 549,660 733,174.1 877,329.4 925,137.3 989,343" fill="none" stroke="#a81e1e" stroke-width="2" stroke-linejoin="round" shape-rendering="crispEdges"/>
<polyline clip-path="url(#cc)" points="13.3,217.4 22,224.2 45.5,264 61.2,279.8 78.2,287 86.6,290.7 92.7,290.7 102.4,298.7 108.4,299.2 116.9,306.5 126.6,313.7 128,316 142.5,325.8 164.3,325.8 189.7,307.7 200.6,317.3 224.8,337.9 248,352.4 261.8,370 278.7,388 300.5,420.8 312.6,437.7 332,468 341.6,472.1 351.3,468 360,469.2 371.4,478 388.3,491.4 395.6,495.5 422.2,493 431.8,489 458.5,486.5 472,483.4 493,482.5 502.7,485 524.5,476.5 541.4,468 551,474 560.8,475.2 577.7,476 584,478.9 590.5,483.4 612.3,485.8 637.7,485.8 655.8,464 684.9,422.9 696,403.5 716.7,383.3 744,331.8 756,312.4 768.2,290.7 780.3,276.1 787.6,271.3 797.2,271.8 806.9,270.8 816.6,268.9 826.3,265.2 833.5,259.2 845.6,250.7 855.3,243.5 863.3,241.8 875.4,248 882.6,251 894.7,254.6 906.8,255.3 918.9,247.3 938.3,237.7 952.8,235.2 962.5,232.1 973.8,231.4 983.5,237.4 1000.4,238.6 1019.7,237.9 1029.4,240.3 1037.2,240.3" fill="none" stroke="#191970" stroke-width="2" stroke-linejoin="round" shape-rendering="crispEdges"/>
<path d="M1033,219.5 h7 v11 h5 l-8.5,7.5 -8.5,-7.5 h5z" fill="#fff" stroke="#ff1010" stroke-width="1.2"/>
<rect x="12.5" y="109.5" width="1305" height="566" fill="none" stroke="#000" shape-rendering="crispEdges"/>
<path d="M1050,110 h9 l-4.5,5z" fill="#708090"/>
<rect x="14" y="112" width="218" height="11" fill="#fff" />
<path d="M16,116 h7 l-3.5,4z" fill="#000"/>
<text x="28.6" y="120.8" font-size="10" fill="#000" font-weight="normal" text-anchor="start" font-family="Liberation Sans" textLength="55" lengthAdjust="spacingAndGlyphs" class="b">AUDUSD,H4</text>
<text x="90.3" y="120.8" font-size="10" fill="#000" font-weight="normal" text-anchor="start" font-family="Liberation Sans" textLength="140.2" lengthAdjust="spacingAndGlyphs" class="b">0.93556 0.93575 0.93550 0.93574</text>
<rect x="1318" y="111" width="3" height="1" fill="#000" />
<text x="1323" y="114.2" font-size="10" fill="#000" font-weight="normal" text-anchor="start" font-family="Liberation Sans" textLength="32.5" lengthAdjust="spacingAndGlyphs" class="b">0.94190</text>
<rect x="1318" y="144" width="3" height="1" fill="#000" />
<text x="1323" y="147.2" font-size="10" fill="#000" font-weight="normal" text-anchor="start" font-family="Liberation Sans" textLength="32.5" lengthAdjust="spacingAndGlyphs" class="b">0.94060</text>
<rect x="1318" y="177" width="3" height="1" fill="#000" />
<text x="1323" y="180.2" font-size="10" fill="#000" font-weight="normal" text-anchor="start" font-family="Liberation Sans" textLength="32.5" lengthAdjust="spacingAndGlyphs" class="b">0.93930</text>
<rect x="1318" y="210" width="3" height="1" fill="#000" />
<text x="1323" y="213.2" font-size="10" fill="#000" font-weight="normal" text-anchor="start" font-family="Liberation Sans" textLength="32.5" lengthAdjust="spacingAndGlyphs" class="b">0.93800</text>
<rect x="1318" y="243" width="3" height="1" fill="#000" />
<text x="1323" y="246.2" font-size="10" fill="#000" font-weight="normal" text-anchor="start" font-family="Liberation Sans" textLength="32.5" lengthAdjust="spacingAndGlyphs" class="b">0.93670</text>
<rect x="1318" y="276" width="3" height="1" fill="#000" />
<text x="1323" y="279.2" font-size="10" fill="#000" font-weight="normal" text-anchor="start" font-family="Liberation Sans" textLength="32.5" lengthAdjust="spacingAndGlyphs" class="b">0.93540</text>
<rect x="1318" y="309" width="3" height="1" fill="#000" />
<text x="1323" y="312.2" font-size="10" fill="#000" font-weight="normal" text-anchor="start" font-family="Liberation Sans" textLength="32.5" lengthAdjust="spacingAndGlyphs" class="b">0.93410</text>
<rect x="1318" y="342" width="3" height="1" fill="#000" />
<text x="1323" y="345.2" font-size="10" fill="#000" font-weight="normal" text-anchor="start" font-family="Liberation Sans" textLength="32.5" lengthAdjust="spacingAndGlyphs" class="b">0.93280</text>
<rect x="1318" y="375" width="3" height="1" fill="#000" />
<text x="1323" y="378.2" font-size="10" fill="#000" font-weight="normal" text-anchor="start" font-family="Liberation Sans" textLength="32.5" lengthAdjust="spacingAndGlyphs" class="b">0.93150</text>
<rect x="1318" y="408" width="3" height="1" fill="#000" />
<text x="1323" y="411.2" font-size="10" fill="#000" font-weight="normal" text-anchor="start" font-family="Liberation Sans" textLength="32.5" lengthAdjust="spacingAndGlyphs" class="b">0.93020</text>
<rect x="1318" y="441" width="3" height="1" fill="#000" />
<text x="1323" y="444.2" font-size="10" fill="#000" font-weight="normal" text-anchor="start" font-family="Liberation Sans" textLength="32.5" lengthAdjust="spacingAndGlyphs" class="b">0.92890</text>
<rect x="1318" y="474" width="3" height="1" fill="#000" />
<text x="1323" y="477.2" font-size="10" fill="#000" font-weight="normal" text-anchor="start" font-family="Liberation Sans" textLength="32.5" lengthAdjust="spacingAndGlyphs" class="b">0.92760</text>
<rect x="1318" y="507" width="3" height="1" fill="#000" />
<text x="1323" y="510.2" font-size="10" fill="#000" font-weight="normal" text-anchor="start" font-family="Liberation Sans" textLength="32.5" lengthAdjust="spacingAndGlyphs" class="b">0.92630</text>
<rect x="1318" y="540" width="3" height="1" fill="#000" />
<text x="1323" y="543.2" font-size="10" fill="#000" font-weight="normal" text-anchor="start" font-family="Liberation Sans" textLength="32.5" lengthAdjust="spacingAndGlyphs" class="b">0.92500</text>
<rect x="1318" y="573" width="3" height="1" fill="#000" />
<text x="1323" y="576.2" font-size="10" fill="#000" font-weight="normal" text-anchor="start" font-family="Liberation Sans" textLength="32.5" lengthAdjust="spacingAndGlyphs" class="b">0.92370</text>
<rect x="1318" y="606" width="3" height="1" fill="#000" />
<text x="1323" y="609.2" font-size="10" fill="#000" font-weight="normal" text-anchor="start" font-family="Liberation Sans" textLength="32.5" lengthAdjust="spacingAndGlyphs" class="b">0.92240</text>
<rect x="1318" y="639" width="3" height="1" fill="#000" />
<text x="1323" y="642.2" font-size="10" fill="#000" font-weight="normal" text-anchor="start" font-family="Liberation Sans" textLength="32.5" lengthAdjust="spacingAndGlyphs" class="b">0.92110</text>
<rect x="1318" y="672" width="3" height="1" fill="#000" />
<text x="1323" y="675.2" font-size="10" fill="#000" font-weight="normal" text-anchor="start" font-family="Liberation Sans" textLength="32.5" lengthAdjust="spacingAndGlyphs" class="b">0.91980</text>
<rect x="1320" y="261" width="40" height="12" fill="#000" />
<text x="1323" y="270.6" font-size="10" fill="#fff" font-weight="normal" text-anchor="start" font-family="Liberation Sans" textLength="33" lengthAdjust="spacingAndGlyphs" >0.93574</text>
<rect x="13" y="676" width="1" height="3" fill="#000" />
<text x="12.4" y="688" font-size="9.55" fill="#000" font-weight="normal" text-anchor="start" font-family="Liberation Sans" class="b">17 Apr 2014</text>
<rect x="77" y="676" width="1" height="3" fill="#000" />
<text x="76.4" y="688" font-size="9.55" fill="#000" font-weight="normal" text-anchor="start" font-family="Liberation Sans" class="b">18 Apr 16:00</text>
<rect x="141" y="676" width="1" height="3" fill="#000" />
<text x="140.4" y="688" font-size="9.55" fill="#000" font-weight="normal" text-anchor="start" font-family="Liberation Sans" class="b">22 Apr 00:00</text>
<rect x="205" y="676" width="1" height="3" fill="#000" />
<text x="204.4" y="688" font-size="9.55" fill="#000" font-weight="normal" text-anchor="start" font-family="Liberation Sans" class="b">23 Apr 08:00</text>
<rect x="269" y="676" width="1" height="3" fill="#000" />
<text x="268.4" y="688" font-size="9.55" fill="#000" font-weight="normal" text-anchor="start" font-family="Liberation Sans" class="b">24 Apr 16:00</text>
<rect x="333" y="676" width="1" height="3" fill="#000" />
<text x="332.4" y="688" font-size="9.55" fill="#000" font-weight="normal" text-anchor="start" font-family="Liberation Sans" class="b">28 Apr 00:00</text>
<rect x="397" y="676" width="1" height="3" fill="#000" />
<text x="396.4" y="688" font-size="9.55" fill="#000" font-weight="normal" text-anchor="start" font-family="Liberation Sans" class="b">29 Apr 08:00</text>
<rect x="461" y="676" width="1" height="3" fill="#000" />
<text x="460.4" y="688" font-size="9.55" fill="#000" font-weight="normal" text-anchor="start" font-family="Liberation Sans" class="b">30 Apr 16:00</text>
<rect x="525" y="676" width="1" height="3" fill="#000" />
<text x="524.4" y="688" font-size="9.55" fill="#000" font-weight="normal" text-anchor="start" font-family="Liberation Sans" class="b">2 May 00:00</text>
<rect x="589" y="676" width="1" height="3" fill="#000" />
<text x="588.4" y="688" font-size="9.55" fill="#000" font-weight="normal" text-anchor="start" font-family="Liberation Sans" class="b">5 May 08:00</text>
<rect x="653" y="676" width="1" height="3" fill="#000" />
<text x="652.4" y="688" font-size="9.55" fill="#000" font-weight="normal" text-anchor="start" font-family="Liberation Sans" class="b">6 May 16:00</text>
<rect x="717" y="676" width="1" height="3" fill="#000" />
<text x="716.4" y="688" font-size="9.55" fill="#000" font-weight="normal" text-anchor="start" font-family="Liberation Sans" class="b">8 May 00:00</text>
<rect x="781" y="676" width="1" height="3" fill="#000" />
<text x="780.4" y="688" font-size="9.55" fill="#000" font-weight="normal" text-anchor="start" font-family="Liberation Sans" class="b">9 May 08:00</text>
<rect x="845" y="676" width="1" height="3" fill="#000" />
<text x="844.4" y="688" font-size="9.55" fill="#000" font-weight="normal" text-anchor="start" font-family="Liberation Sans" class="b">12 May 16:00</text>
<rect x="909" y="676" width="1" height="3" fill="#000" />
<text x="908.4" y="688" font-size="9.55" fill="#000" font-weight="normal" text-anchor="start" font-family="Liberation Sans" class="b">14 May 00:00</text>
<rect x="973" y="676" width="1" height="3" fill="#000" />
<text x="972.4" y="688" font-size="9.55" fill="#000" font-weight="normal" text-anchor="start" font-family="Liberation Sans" class="b">15 May 08:00</text>
<rect x="1037" y="676" width="1" height="3" fill="#000" />
<text x="1036.4" y="688" font-size="9.55" fill="#000" font-weight="normal" text-anchor="start" font-family="Liberation Sans" class="b">16 May 16:00</text>
<rect x="10" y="693" width="1352" height="1" fill="#e0e0e0" />
<rect x="8" y="695" width="1354" height="1" fill="#000" />
<rect x="8" y="696" width="1354" height="1" fill="#fafafa" />
<rect x="8" y="697" width="1353" height="18" fill="#f0f0f0" />
<rect x="8" y="715" width="1354" height="1" fill="#fcfcfc" />
<rect x="8" y="697" width="1" height="17" fill="#808080" />
<rect x="9" y="697" width="1" height="17" fill="#a0a0a0" />
<rect x="416" y="695" width="80" height="19" fill="#000" />
<rect x="417" y="695" width="78" height="18" fill="#fff" />
<text x="23.3" y="708" font-size="10" fill="#68687e" font-weight="normal" text-anchor="start" font-family="Liberation Sans" textLength="63.8" lengthAdjust="spacingAndGlyphs" >EURUSD,M30</text>
<rect x="100" y="698" width="1" height="13" fill="#606060" />
<text x="109.5" y="708" font-size="10" fill="#68687e" font-weight="normal" text-anchor="start" font-family="Liberation Sans" textLength="62.0" lengthAdjust="spacingAndGlyphs" >GBPUSD,M30</text>
<rect x="185" y="698" width="1" height="13" fill="#606060" />
<text x="194.5" y="708" font-size="10" fill="#68687e" font-weight="normal" text-anchor="start" font-family="Liberation Sans" textLength="57.3" lengthAdjust="spacingAndGlyphs" >USDJPY,H1</text>
<rect x="260" y="698" width="1" height="13" fill="#606060" />
<text x="270" y="708" font-size="10" fill="#68687e" font-weight="normal" text-anchor="start" font-family="Liberation Sans" textLength="54.8" lengthAdjust="spacingAndGlyphs" >EURJPY,H4</text>
<rect x="335" y="698" width="1" height="13" fill="#606060" />
<text x="347.4" y="708" font-size="10" fill="#68687e" font-weight="normal" text-anchor="start" font-family="Liberation Sans" textLength="57.0" lengthAdjust="spacingAndGlyphs" >GBPCHF,H4</text>
<text x="427.7" y="708" font-size="10" fill="#000" font-weight="normal" text-anchor="start" font-family="Liberation Sans" textLength="57.7" lengthAdjust="spacingAndGlyphs" >AUDUSD,H4</text>
<text x="506" y="708" font-size="10" fill="#68687e" font-weight="normal" text-anchor="start" font-family="Liberation Sans" textLength="58" lengthAdjust="spacingAndGlyphs" >NZDUSD,H4</text>
<rect x="575" y="698" width="1" height="13" fill="#606060" />
<text x="587.5" y="708" font-size="10" fill="#68687e" font-weight="normal" text-anchor="start" font-family="Liberation Sans" textLength="56.5" lengthAdjust="spacingAndGlyphs" >XAUUSD,H1</text>
<rect x="656" y="698" width="1" height="13" fill="#606060" />
<text x="665" y="708" font-size="10" fill="#68687e" font-weight="normal" text-anchor="start" font-family="Liberation Sans" textLength="67.5" lengthAdjust="spacingAndGlyphs" >EURCHF,Daily</text>
<rect x="744" y="698" width="1" height="13" fill="#606060" />
<text x="752.5" y="708" font-size="10" fill="#68687e" font-weight="normal" text-anchor="start" font-family="Liberation Sans" textLength="63.5" lengthAdjust="spacingAndGlyphs" >EURGBP,M30</text>
<rect x="828" y="698" width="1" height="13" fill="#606060" />
<text x="837.5" y="708" font-size="10" fill="#68687e" font-weight="normal" text-anchor="start" font-family="Liberation Sans" textLength="54.0" lengthAdjust="spacingAndGlyphs" >GBPJPY,H4</text>
<rect x="905" y="698" width="1" height="13" fill="#606060" />
<text x="914" y="708" font-size="10" fill="#68687e" font-weight="normal" text-anchor="start" font-family="Liberation Sans" textLength="59.5" lengthAdjust="spacingAndGlyphs" >AUDNZD,H1</text>
<rect x="985" y="698" width="1" height="13" fill="#606060" />
<text x="994" y="708" font-size="10" fill="#68687e" font-weight="normal" text-anchor="start" font-family="Liberation Sans" textLength="59.5" lengthAdjust="spacingAndGlyphs" >USDCAD,H4</text>
<rect x="1065" y="698" width="1" height="13" fill="#606060" />
<text x="1074" y="708" font-size="10" fill="#68687e" font-weight="normal" text-anchor="start" font-family="Liberation Sans" textLength="57.5" lengthAdjust="spacingAndGlyphs" >USDCHF,H1</text>
<rect x="1144" y="698" width="1" height="13" fill="#606060" />
<path d="M1337,702 l-3.5,3 3.5,3z M1351,702 l3.5,3 -3.5,3z" fill="#9a9a9a"/>
<rect x="8" y="716" width="1354" height="20" fill="#f0f0f0" />
<text x="10.2" y="731.1" font-size="11.5" fill="#000" font-weight="normal" text-anchor="start" font-family="Liberation Sans" textLength="134.8" lengthAdjust="spacingAndGlyphs" >Для справки, нажмите F1</text>
<rect x="636" y="719" width="1" height="16" fill="#a8a8a8" />
<rect x="753" y="719" width="1" height="16" fill="#a8a8a8" />
<rect x="855" y="719" width="1" height="16" fill="#a8a8a8" />
<rect x="926" y="719" width="1" height="16" fill="#a8a8a8" />
<rect x="997" y="719" width="1" height="16" fill="#a8a8a8" />
<rect x="1064" y="719" width="1" height="16" fill="#a8a8a8" />
<rect x="1135" y="719" width="1" height="16" fill="#a8a8a8" />
<rect x="1200" y="719" width="1" height="16" fill="#a8a8a8" />
<text x="642.6" y="730.9" font-size="11.5" fill="#000" font-weight="normal" text-anchor="start" font-family="Liberation Sans" textLength="37" lengthAdjust="spacingAndGlyphs" >Default</text>
<rect x="1206" y="721" width="2" height="9" fill="#4a7000" />
<rect x="1206" y="731" width="2" height="2" fill="#8a0000" />
<rect x="1209" y="721" width="2" height="8" fill="#4a7000" />
<rect x="1209" y="730" width="2" height="3" fill="#8a0000" />
<rect x="1212" y="721" width="2" height="7" fill="#4a7000" />
<rect x="1212" y="729" width="2" height="4" fill="#8a0000" />
<rect x="1215" y="721" width="2" height="6" fill="#4a7000" />
<rect x="1215" y="728" width="2" height="5" fill="#8a0000" />
<rect x="1218" y="721" width="2" height="5" fill="#4a7000" />
<rect x="1218" y="727" width="2" height="6" fill="#8a0000" />
<rect x="1221" y="721" width="2" height="4" fill="#4a7000" />
<rect x="1221" y="726" width="2" height="7" fill="#8a0000" />
<rect x="1224" y="721" width="2" height="3" fill="#4a7000" />
<rect x="1224" y="725" width="2" height="8" fill="#8a0000" />
<rect x="1227" y="721" width="2" height="2" fill="#4a7000" />
<rect x="1227" y="724" width="2" height="9" fill="#8a0000" />
<text x="1264" y="731.1" font-size="11.5" fill="#000" font-weight="normal" text-anchor="start" font-family="Liberation Sans" textLength="48" lengthAdjust="spacingAndGlyphs" >1340/1 kb</text>
<path d="M1348,735 l12,-12 M1352,735 l8,-8 M1356,735 l4,-4" stroke="#9a9a9a" stroke-width="1"/>
<rect x="8" y="736" width="1362" height="8" fill="#84a84c" />
<rect x="8" y="736" width="1362" height="1" fill="#5c7a30" />
<rect x="60.5" y="737.5" width="57" height="8" fill="#9cbc6c" stroke="#b4cc90"/>
<rect x="245.5" y="737.5" width="59" height="8" fill="#9cbc6c" stroke="#b4cc90"/>
<rect x="308.5" y="737.5" width="57" height="8" fill="#9cbc6c" stroke="#b4cc90"/>
<rect x="370.5" y="737.5" width="57" height="8" fill="#9cbc6c" stroke="#f4f8ec"/>
<rect x="432.5" y="737.5" width="57" height="8" fill="#9cbc6c" stroke="#b4cc90"/>
<path d="M30,744 l16,-3 v3z" fill="#e8e8e8"/>
<ellipse cx="89" cy="745" rx="8" ry="4" fill="#e04040"/>
<rect x="136" y="741" width="30" height="3" fill="#0a8a0a" />
<path d="M198,744 l18,-5 v5z" fill="#2a4aa0"/>
<ellipse cx="274" cy="745" rx="9" ry="4" fill="#10a0e8"/>
<rect x="322" y="740" width="16" height="4" fill="#5aa0e0" />
<ellipse cx="399" cy="746" rx="11" ry="6" fill="#f08a20"/>
<path d="M455,744 l2,-4 h4 l2,4z M452,742h14" fill="#e01010" stroke="#e01010"/>
</svg>
</body></html>
